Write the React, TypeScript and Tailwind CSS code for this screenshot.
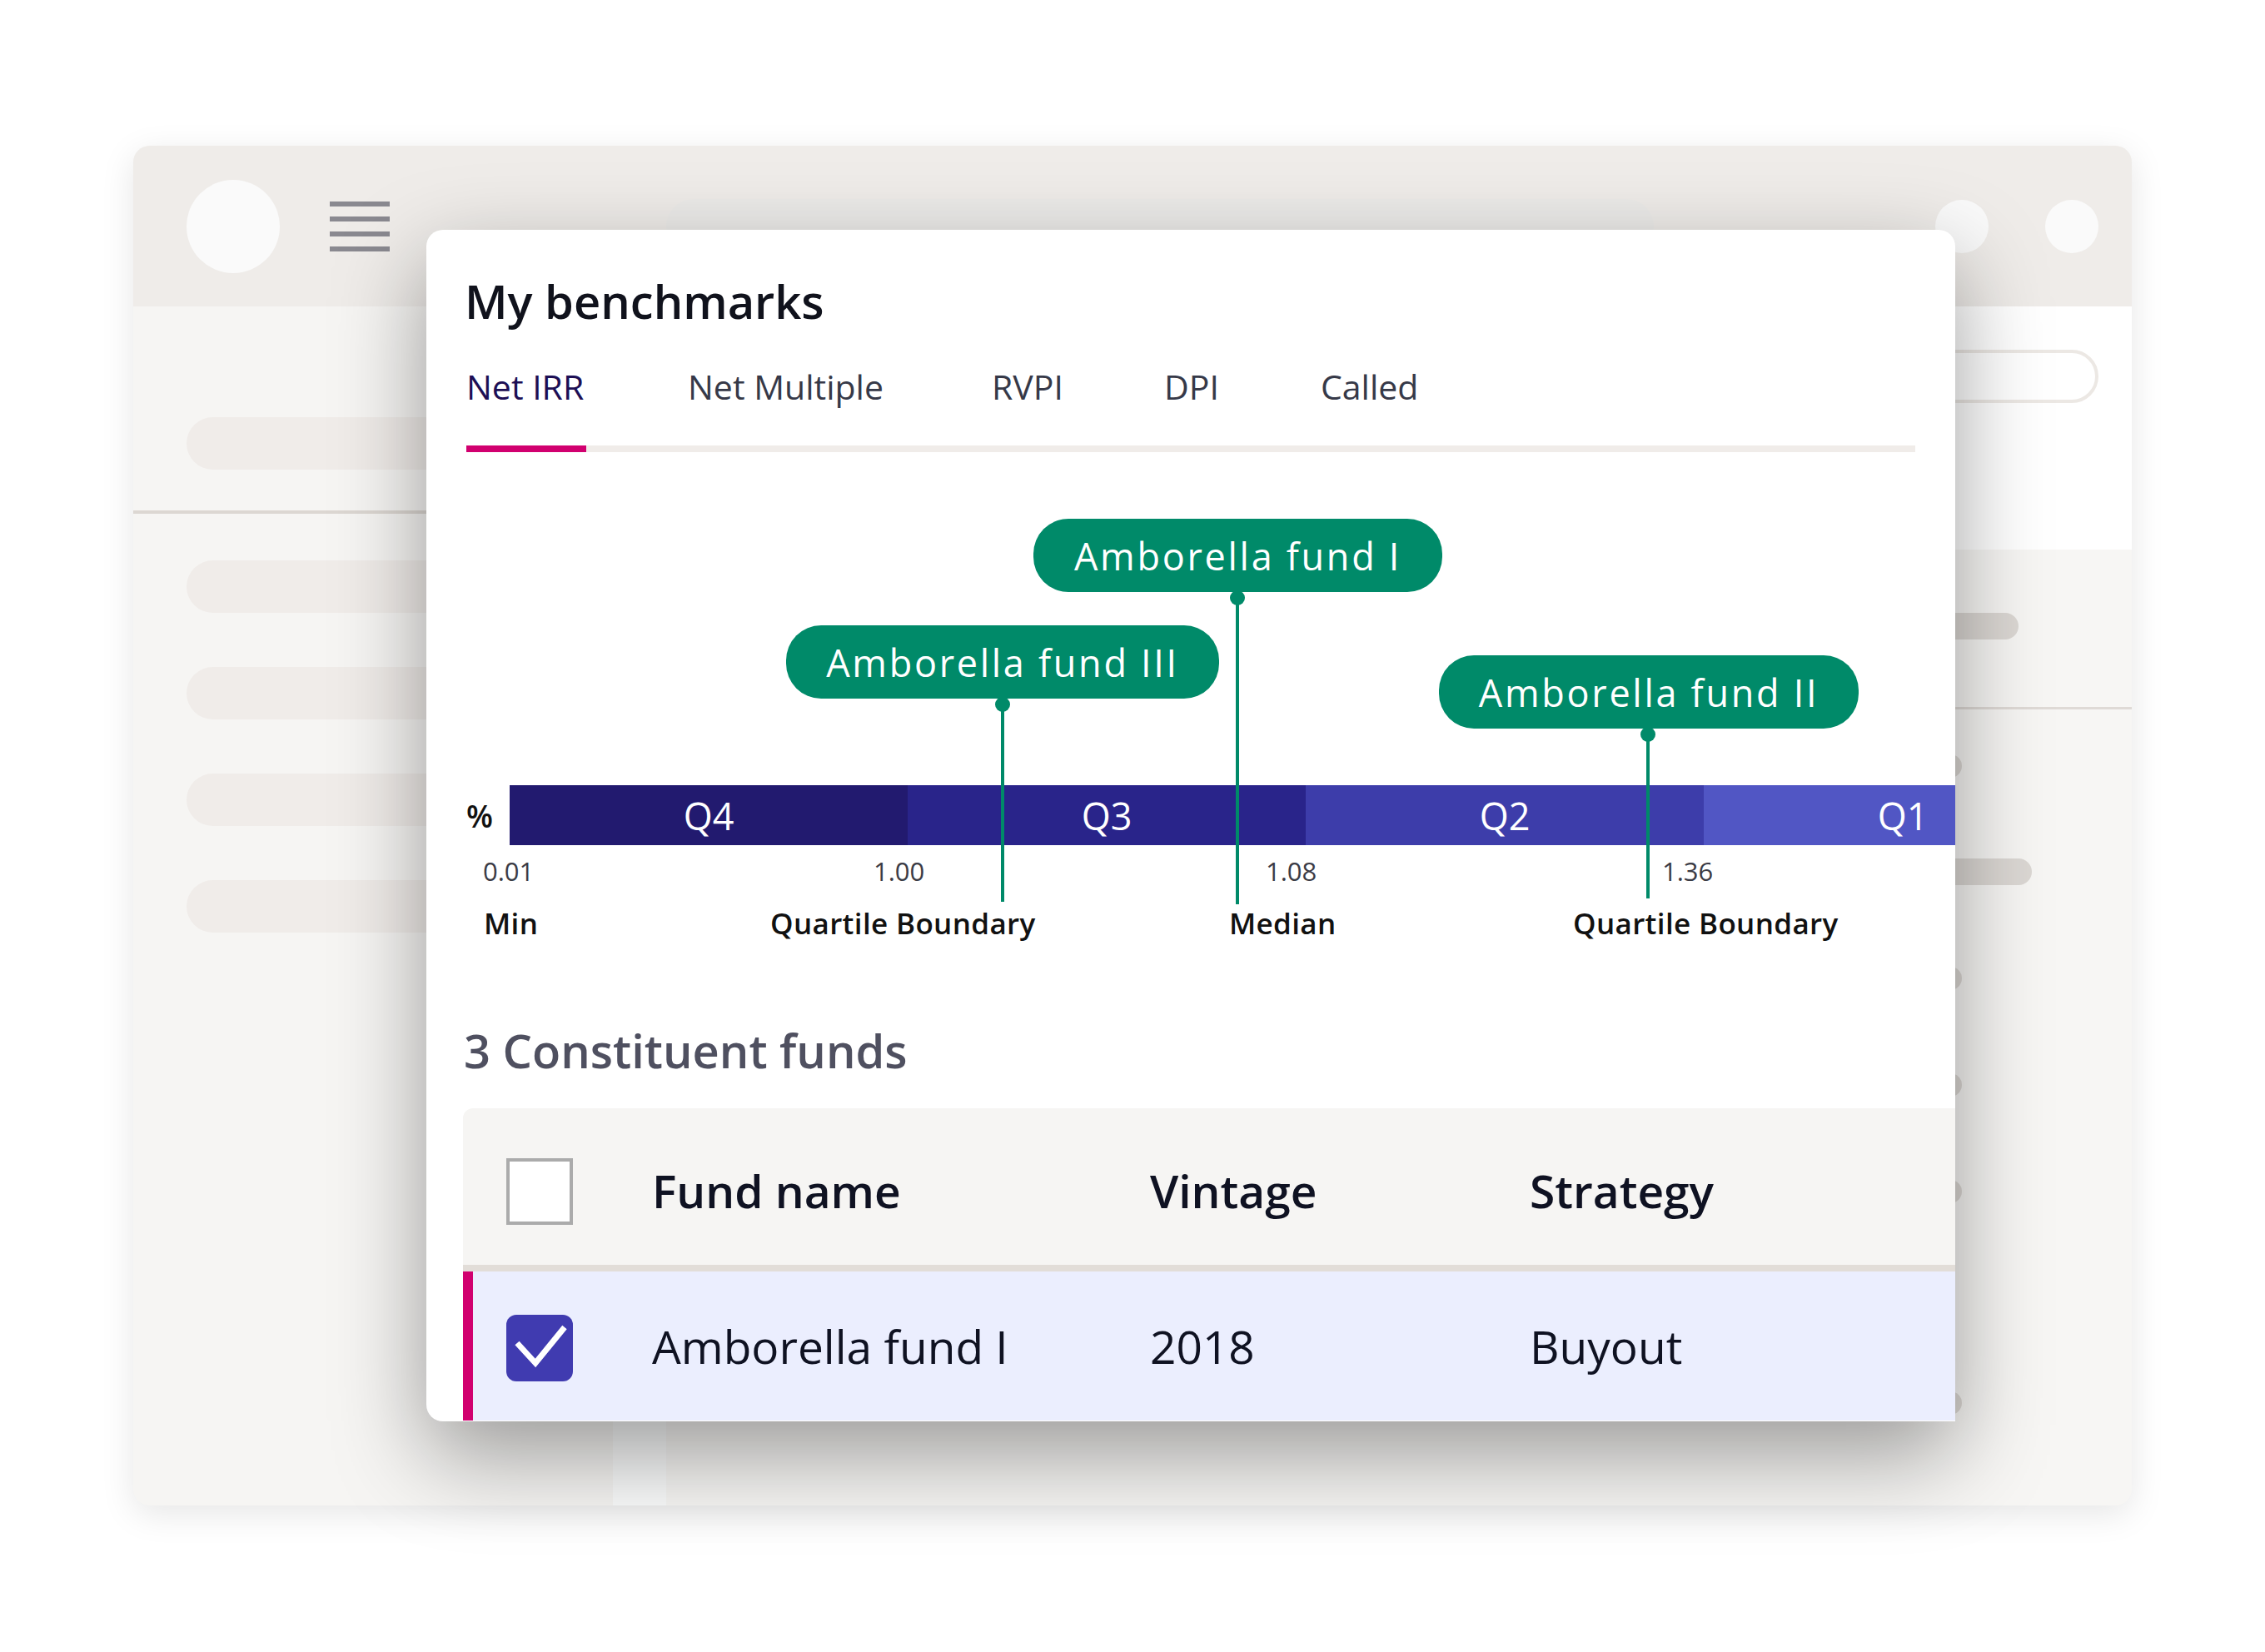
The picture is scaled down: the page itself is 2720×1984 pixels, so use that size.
import React from "react";

type Pin = { name: string; left: number; top: number; width: number; x: number; end: number };

// Funds pinned above the quartile bar (positions in chart coordinates)
const pins: Pin[] = [
  { name: "Amborella fund I", left: 729, top: 80, width: 491, x: 974, end: 543 },
  { name: "Amborella fund III", left: 432, top: 208, width: 520, x: 692, end: 540 },
  { name: "Amborella fund II", left: 1216, top: 244, width: 504, x: 1467, end: 536 },
];

const segments = [
  { label: "Q4", cls: "bg-[#221a6f]" },
  { label: "Q3", cls: "bg-[#29248a]" },
  { label: "Q2", cls: "bg-[#3d3daa]" },
  { label: "Q1", cls: "bg-[#5156c4]" },
];

const ticks = [
  { value: "0.01", left: 68 },
  { value: "1.00", left: 537 },
  { value: "1.08", left: 1008 },
  { value: "1.36", left: 1484 },
];

const marks = [
  { label: "Min", left: 69 },
  { label: "Quartile Boundary", left: 413 },
  { label: "Median", left: 964 },
  { label: "Quartile Boundary", left: 1377 },
];

const tabs = [
  { label: "Net IRR", w: "w-[266px]", active: true },
  { label: "Net Multiple", w: "w-[365px]", active: false },
  { label: "RVPI", w: "w-[207px]", active: false },
  { label: "DPI", w: "w-[188px]", active: false },
  { label: "Called", w: "w-[200px]", active: false },
];

function AppWindow() {
  return (
    <div className="w-[2400px] h-[1633px] rounded-[20px] bg-[#f6f5f3] shadow-[0_10px_40px_rgba(0,0,0,0.10)] overflow-hidden flex flex-col">
      {/* top bar */}
      <div className="h-[193px] shrink-0 bg-[#efece9] flex items-center">
        <div className="ml-[64px] w-[112px] h-[112px] rounded-full bg-[#fafafa]" />
        <div className="ml-[60px] w-[72px] flex flex-col gap-[12px]">
          <div className="h-[6px] bg-[#8a8990]" />
          <div className="h-[6px] bg-[#8a8990]" />
          <div className="h-[6px] bg-[#8a8990]" />
          <div className="h-[6px] bg-[#8a8990]" />
        </div>
        <div className="ml-[332px] w-[1186px] h-[66px] rounded-full bg-[#ecebe9]" />
        <div className="ml-[338px] w-[64px] h-[64px] rounded-full bg-[#fafafa]" />
        <div className="ml-[68px] w-[64px] h-[64px] rounded-full bg-[#fafafa]" />
      </div>
      <div className="flex-1 flex">
        {/* sidebar */}
        <div className="w-[576px] flex flex-col">
          <div className="h-[245px] pt-[133px] pl-[64px]">
            <div className="w-[440px] h-[63px] rounded-full bg-[#f0ece9]" />
          </div>
          <div className="h-[4px] bg-[#dcd7d2]" />
          <div className="pt-[56px] pl-[64px] flex flex-col gap-[65px]">
            <div className="w-[440px] h-[63px] rounded-full bg-[#f0ece9]" />
            <div className="w-[440px] h-[63px] rounded-full bg-[#f0ece9]" />
            <div className="w-[440px] h-[63px] rounded-full bg-[#f0ece9]" />
            <div className="w-[440px] h-[63px] rounded-full bg-[#f0ece9]" />
          </div>
        </div>
        <div className="w-[64px] bg-[#fafbfb]" />
        {/* main */}
        <div className="flex-1 flex flex-col">
          <div className="h-[292px] bg-white pt-[52px] pr-[40px] flex justify-end items-start">
            <div className="w-[1000px] h-[64px] rounded-full border-[4px] border-[#ece8e4]" />
          </div>
          <div className="flex-1 bg-[#f7f6f4] flex flex-col">
            <div className="pt-[76px] pr-[136px] flex justify-end">
              <div className="w-[600px] h-[32px] rounded-full bg-[#dcd8d4]" />
            </div>
            <div className="mt-[81px] h-[3px] bg-[#dfdad6]" />
            <div className="mt-[54px] pr-[204px] flex justify-end">
              <div className="w-[28px] h-[28px] rounded-full bg-[#dcd8d4]" />
            </div>
            <div className="mt-[97px] pr-[120px] flex justify-end">
              <div className="w-[600px] h-[32px] rounded-full bg-[#dcd8d4]" />
            </div>
            <div className="mt-[98px] pr-[204px] flex flex-col items-end gap-[100px]">
              <div className="w-[28px] h-[28px] rounded-full bg-[#dcd8d4]" />
              <div className="w-[28px] h-[28px] rounded-full bg-[#dcd8d4]" />
              <div className="w-[28px] h-[28px] rounded-full bg-[#dcd8d4]" />
            </div>
            <div className="mt-[226px] pr-[204px] flex justify-end">
              <div className="w-[28px] h-[28px] rounded-full bg-[#dcd8d4]" />
            </div>
          </div>
        </div>
      </div>
    </div>
  );
}

function QuartileChart() {
  return (
    <div className="relative h-[640px]">
      {/* quartile bar */}
      <div className="absolute left-[100px] top-[400px] h-[72px] flex">
        {segments.map((s) => (
          <div
            key={s.label}
            className={`${s.cls} w-[478px] h-full flex items-center justify-center text-white text-[45px] leading-none`}
          >
            {s.label}
          </div>
        ))}
      </div>
      <div className="absolute left-[48px] top-[418px] text-[37px] leading-none font-semibold text-[#111]">%</div>

      {/* fund pins */}
      {pins.map((p) => (
        <React.Fragment key={p.name}>
          <div
            className="absolute w-[4px] bg-[#008a69]"
            style={{ left: p.x - 2, top: p.top + 95, height: p.end - (p.top + 95) }}
          />
          <div
            className="absolute w-[18px] h-[18px] rounded-full bg-[#008a69]"
            style={{ left: p.x - 9, top: p.top + 86 }}
          />
          <div
            className="absolute h-[88px] rounded-[42px] bg-[#008a69] text-white text-[45px] leading-none tracking-[0.06em] flex items-center justify-center"
            style={{ left: p.left, top: p.top, width: p.width }}
          >
            {p.name}
          </div>
        </React.Fragment>
      ))}

      {ticks.map((t) => (
        <div
          key={t.value}
          className="absolute top-[488px] text-[31px] leading-none text-[#3b3b45]"
          style={{ left: t.left }}
        >
          {t.value}
        </div>
      ))}
      {marks.map((m) => (
        <div
          key={m.left}
          className="absolute top-[548px] text-[35px] leading-none font-semibold tracking-[0.01em] text-[#111]"
          style={{ left: m.left }}
        >
          {m.label}
        </div>
      ))}
    </div>
  );
}

function BenchmarkCard() {
  return (
    <div className="absolute left-[512px] top-[276px] w-[1836px] h-[1431px] bg-white rounded-tl-[20px] rounded-tr-[20px] rounded-bl-[20px] overflow-hidden shadow-[0_40px_110px_rgba(0,0,0,0.38)]">
      <div className="pl-[46px] pt-[57px]">
        <h1 className="text-[56px] leading-none font-semibold text-[#10121c]">My benchmarks</h1>
        <div className="mt-[55px] pl-[2px] flex text-[41px] leading-none">
          {tabs.map((t) => (
            <div key={t.label} className={`${t.w} ${t.active ? "text-[#1d0f55]" : "text-[#363948]"}`}>
              {t.label}
            </div>
          ))}
        </div>
        <div className="mt-[50px] ml-[2px] w-[1740px] h-[8px] bg-[#f0ece9]">
          <div className="w-[144px] h-full bg-[#d1006f]" />
        </div>
      </div>

      <QuartileChart />

      <h2 className="mt-[50px] pl-[45px] text-[56px] leading-none font-semibold text-[#4f5060]">
        3 Constituent funds
      </h2>

      <div className="mt-[42px] ml-[44px] w-[1900px]">
        <div className="h-[196px] bg-[#f6f5f3] rounded-tl-[12px] border-b-[8px] border-[#e2ddd8] flex items-center text-[55px] leading-none font-semibold text-[#0f1222]">
          <div className="w-[227px] pl-[52px] pt-[12px]">
            <div className="w-[80px] h-[80px] border-[4px] border-[#ababab] bg-white" />
          </div>
          <div className="w-[598px] pt-[8px]">Fund name</div>
          <div className="w-[456px] pt-[8px]">Vintage</div>
          <div className="pt-[8px]">Strategy</div>
        </div>
        <div className="h-[179px] bg-[#ebeefe] flex items-stretch text-[55px] leading-none text-[#0f1222]">
          <div className="w-[12px] bg-[#d1006f]" />
          <div className="w-[215px] pl-[40px] pt-[4px] flex items-center">
            <div className="w-[80px] h-[80px] rounded-[12px] bg-[#403bb0] flex items-center justify-center">
              <svg width="80" height="80" viewBox="0 0 80 80" fill="none">
                <path d="M13 34 L35 58 L70 15" stroke="#ffffff" strokeWidth="7" strokeLinejoin="miter" />
              </svg>
            </div>
          </div>
          <div className="w-[598px] flex items-center">Amborella fund I</div>
          <div className="w-[456px] flex items-center">2018</div>
          <div className="flex items-center">Buyout</div>
        </div>
      </div>
    </div>
  );
}

export default function App() {
  return (
    <div className="relative w-[2720px] h-[1984px] bg-white overflow-hidden font-['Open_Sans','Noto_Sans',sans-serif]">
      <div className="pt-[175px] pl-[160px]">
        <AppWindow />
      </div>
      <BenchmarkCard />
    </div>
  );
}
